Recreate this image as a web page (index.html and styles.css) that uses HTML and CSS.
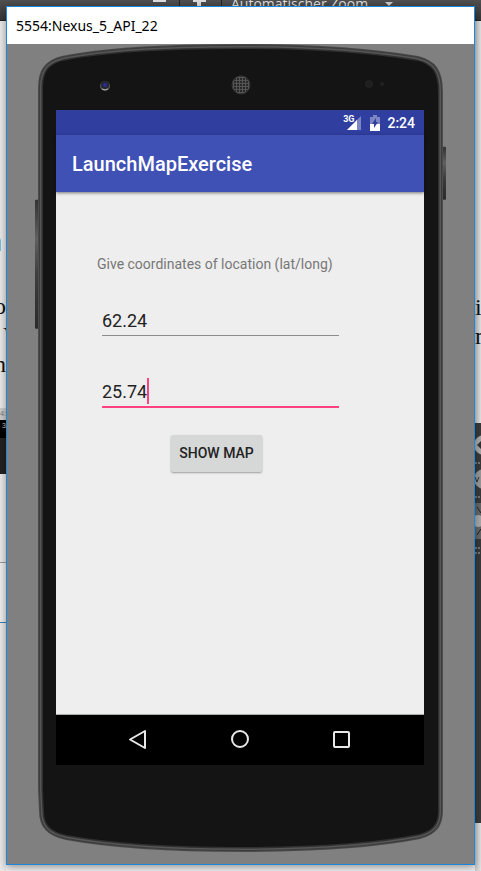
FILE: index.html
```html
<!DOCTYPE html>
<html lang="en">
<head>
<meta charset="utf-8">
<meta name="viewport" content="width=device-width, initial-scale=1">
<title>5554:Nexus_5_API_22</title>
<link rel="stylesheet" href="styles.css">
</head>
<body>
<div class="desktop">
  <div class="backdrop">
    <div class="toolbar">
      <span class="tool tool-minus"></span>
      <span class="tool tool-plus"></span>
      <span class="zoom-label">Automatischer Zoom</span>
      <span class="zoom-arrow"></span>
    </div>
    <div class="sheet">
      <div class="strip strip-left">
        <div class="heading">n</div>
        <div class="line">o</div>
        <div class="line line-start">V</div>
        <div class="line">h</div>
        <div class="thumb"><div class="thumb-label">4:</div><div class="thumb-bar">3</div></div>
        <div class="frame"></div>
      </div>
      <div class="strip strip-right">
        <div class="line">i</div>
        <div class="line">m</div>
        <svg class="panel" viewBox="0 0 6 400" preserveAspectRatio="xMinYMin slice" aria-hidden="true">
          <rect width="6" height="400" fill="#3a3a3a"/>
          <rect y="80" width="6" height="36" fill="#666"/>
          <circle cx="9" cy="22" r="10" fill="#aaa"/><path d="M2 22l4-4v8z" fill="#333"/>
          <circle cx="9" cy="56" r="10" fill="#999"/><path d="M0 54l2 5 2-5" fill="none" stroke="#333"/>
          <circle cx="3" cy="98" r="6" fill="#aaa"/><path d="M2 84l4 6M2 112l4-6" stroke="#222"/>
          <path d="M0 40h6M0 74h6M0 125h6M0 130h6" stroke="#777" stroke-width="2" stroke-dasharray="2 1"/>
        </svg>
      </div>
    </div>
  </div>

  <div class="window">
    <header class="titlebar">5554:Nexus_5_API_22</header>
    <div class="stage">
      <div class="phone">
        <svg class="shell" viewBox="35 44 411 810" preserveAspectRatio="none" aria-hidden="true">
          <defs>
            <linearGradient id="key" x1="0" y1="0" x2="0" y2="1">
              <stop offset="0" stop-color="#333"/><stop offset=".15" stop-color="#484848"/>
              <stop offset=".3" stop-color="#606060"/><stop offset=".6" stop-color="#3c3c3c"/><stop offset="1" stop-color="#2a2a2a"/>
            </linearGradient>
            <pattern id="mesh" width="3" height="3" patternUnits="userSpaceOnUse">
              <rect width="3" height="3" fill="#555"/><circle cx="1" cy="1" r="1" fill="#181818"/>
            </pattern>
            <path id="outline" d="M39 88C39 70 46 61 62 57C110 47 180 45 241 45C310 45 370 49 418 57C435 61 442 71 442 92V812C442 827 435 835 420 839C370 849 300 852 240 852C170 852 110 848 66 840C47 836 40 827 40 812L39 790Z"/>
          </defs>
          <rect x="35" y="200" width="4" height="129" rx="1" fill="url(#key)"/>
          <rect x="442" y="147" width="4" height="53" rx="1" fill="url(#key)"/>
          <clipPath id="inside"><use href="#outline"/></clipPath>
          <use href="#outline" fill="#141414" stroke="#4c4c4c" stroke-width="2"/>
          <g clip-path="url(#inside)" fill="none">
            <use href="#outline" stroke="#303030" stroke-width="8"/>
            <use href="#outline" stroke="#565656" stroke-width="5"/>
            <use href="#outline" stroke="#3c3c3c" stroke-width="2"/>
          </g>
          <circle cx="105" cy="86" r="5" fill="#555"/><circle cx="105" cy="85" r="4" fill="#25252d"/>
          <circle cx="105" cy="85" r="2" fill="#2b2ba0"/><path d="M102 89q3 2 6 0" stroke="#aaa" fill="none"/>
          <circle cx="241" cy="85" r="9" fill="url(#mesh)" stroke="#383838"/>
          <circle cx="369" cy="84" r="4" fill="#202020"/><circle cx="382" cy="84" r="2" fill="#222"/>
        </svg>
        <div class="screen">
          <div class="statusbar">
            <svg class="signal" viewBox="0 0 20 18" role="img" aria-label="Mobile signal">
              <path d="M18 2v14H4z" fill="#7c86c2"/><path d="M14 6v10H4z" fill="#fff"/>
            </svg>
            <span class="network">3G</span>
            <svg class="battery" viewBox="0 0 10 16" role="img" aria-label="Battery charging">
              <path d="M0 2h3V0h4v2h3v7H0z" fill="#7c86c2"/><path d="M0 9h10v7H0z" fill="#fff"/>
              <path d="M6 3L2 9h2v4l4-6H6z" fill="#303f9f"/>
            </svg>
            <span>2:24</span>
          </div>
          <h1 class="appbar">LaunchMapExercise</h1>
          <main class="content">
            <form class="form">
              <p class="hint" id="hint">Give coordinates of location (lat/long)</p>
              <div class="field">
                <input type="text" value="62.24" aria-label="Latitude" aria-describedby="hint">
              </div>
              <div class="field field-active">
                <input type="text" value="25.74" aria-label="Longitude" aria-describedby="hint">
                <span class="caret"></span>
              </div>
              <button class="show" type="button">SHOW MAP</button>
            </form>
          </main>
          <nav class="navbar">
            <button type="button" aria-label="Back"><svg viewBox="0 0 22 22"><path d="M18 2v17L3 10.500z"/></svg></button>
            <button type="button" aria-label="Home"><svg viewBox="0 0 22 22"><circle cx="11" cy="10" r="8"/></svg></button>
            <button type="button" aria-label="Recent apps"><svg viewBox="0 0 22 22"><rect x="3" y="3" width="15" height="15" rx="1"/></svg></button>
          </nav>
        </div>
      </div>
    </div>
  </div>
</div>
</body>
</html>
```
FILE: styles.css
```css
* { box-sizing: border-box; }
body { margin: 0; background: #f0f0f0; font-family: Roboto, "Liberation Sans", sans-serif; }
h1, p { margin: 0; font-weight: 400; }
button, input { font: inherit; border: 0; padding: 0; background: none; }

.desktop { position: relative; overflow: hidden; padding: 6px; }
.backdrop { position: absolute; inset: 0; overflow: hidden; background: #f0f0f0; }

.toolbar {
  display: flex; align-items: flex-start; height: 21px; padding-left: 153px;
  background: linear-gradient(#505050, #363636); border-bottom: 1px solid #222;
  color: #ddd; font: 14px/20px "Open Sans", sans-serif;
}
.tool { height: 20px; background: no-repeat linear-gradient(#ddd, #ddd); }
.tool-minus { width: 27px; border-right: 1px solid #222; background-size: 13px 2px; }
.tool-plus { width: 42px; border-right: 1px solid #222; background-size: 13px 2px, 4px 6px; background-image: linear-gradient(#ddd, #ddd), linear-gradient(#ddd, #ddd); background-position: 13px 0, 17px 0; }
.zoom-label { margin: -6px 17px 0 9px; }
.zoom-arrow { margin-top: 2px; border: 4px solid transparent; border-top-color: #ccc; }

.sheet { display: flex; justify-content: space-between; }
.strip { width: 6px; overflow: hidden; background: #e9e9e9; color: #111; font: 24px/29px "Liberation Serif", serif; }
.strip-left { display: flex; flex-direction: column; align-items: flex-end; padding-top: 206px; }
.strip-right { height: 850px; padding-top: 272px; background: linear-gradient(90deg, #c8c8c8, #e4e4e4); }
.line-start { width: 3px; }
.heading { margin: 0 4px 36px 0; color: #2d5a90; font: 28px/29px "Liberation Sans", sans-serif; }
.thumb { width: 6px; height: 66px; margin-top: 29px; background: #222; font: 7px/12px "Liberation Sans", sans-serif; }
.thumb-label { background: #ccc; color: #777; }
.thumb-bar { height: 18px; background: #000; color: #ccc; text-align: right; }
.frame { width: 6px; height: 61px; margin-top: 88px; border-top: 1px solid #999; border-bottom: 1px solid #3b80b0; background: #eee; }
.panel { display: block; width: 6px; height: 400px; margin-top: 72px; }

.window { position: relative; border: 1px solid #1a86dc; background: #808080; box-shadow: 0 2px 8px rgba(0, 0, 0, .4); }
.titlebar { padding: 0 9px; background: #fff; color: #000; font: 14px/37px "Noto Sans", sans-serif; }
.stage { padding: 0 28px 11px; }
.phone { position: relative; padding: 66px 22px 88px 21px; }
.shell { position: absolute; inset: 0; width: 100%; height: 100%; }

.screen { position: relative; background: #eee; }
.statusbar {
  display: flex; align-items: center; justify-content: flex-end; gap: 7px; height: 25px; padding-right: 9px;
  background: #303f9f; color: #fff; font-size: 14px; font-weight: 500;
}
.network { order: -1; align-self: flex-start; margin-right: -18px; font-size: 9px; line-height: 18px; font-weight: 700; }
.signal { width: 20px; height: 18px; }
.battery { width: 10px; height: 16px; }
.appbar {
  padding: 2px 16px 0; background: #3f51b5; color: #fff; font-size: 20px; line-height: 55px; font-weight: 500;
  box-shadow: 0 1px 3px rgba(0, 0, 0, .5);
}
.content { padding: 62px 41px 242px; }
.form { display: flex; flex-direction: column; }
.hint { color: #777; font-size: 14px; line-height: 20px; white-space: nowrap; }
.field { position: relative; margin: 32px 44px 0 5px; border-bottom: 1px solid #8b8e8d; }
.field input { display: block; width: 100%; height: 29px; color: #222; font-size: 18px; outline: 0; }
.field-active { margin-top: 41px; border-bottom: 2px solid #ff4081; }
.caret { position: absolute; left: 45px; top: 1px; width: 2px; height: 26px; background: #ff4081; }
.show {
  align-self: center; margin: 27px 47px 0 0; padding: 0 8px; border-radius: 2px; background: #d6d7d7; color: #222;
  font-size: 14px; line-height: 37px; font-weight: 500; box-shadow: 0 1px 2px rgba(0, 0, 0, .35);
}
.navbar { display: flex; justify-content: center; gap: 80px; height: 51px; border-top: 1px solid #a5acac; background: #000; }
.navbar svg { display: block; width: 22px; height: 22px; fill: none; stroke: #e8e8e8; stroke-width: 2; stroke-linejoin: round; }
```
